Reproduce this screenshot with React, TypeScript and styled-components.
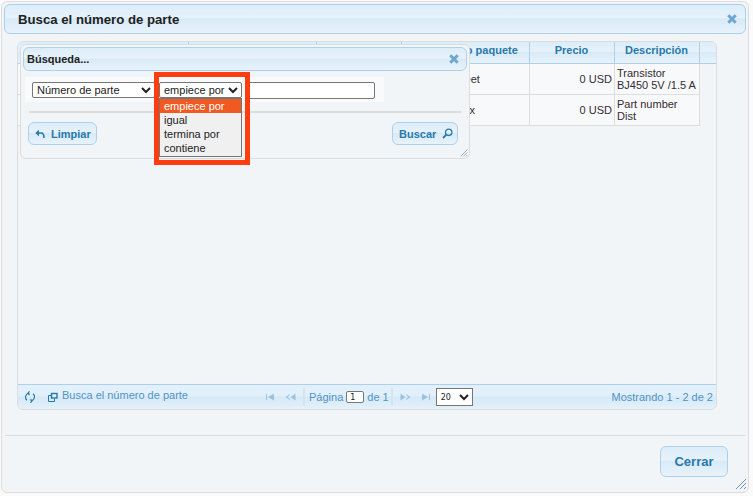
import React from "react";
import styled, { createGlobalStyle } from "styled-components";

const GlobalStyle = createGlobalStyle`
  html, body {
    margin: 0;
    padding: 0;
    background: #fafafa;
    overflow: hidden;
  }
  body {
    font-family: "Liberation Sans", Arial, sans-serif;
    font-size: 11px;
    color: #362b36;
  }
  * {
    box-sizing: border-box;
  }
`;

const headerGradient = "linear-gradient(180deg, #dcedf9 0%, #e6f2fb 45%, #d8eaf7 50%, #e8f3fb 100%)";

const columns = [
  { title: "Número", width: 171 },
  { title: "Fabricante", width: 128 },
  { title: "Voltaje", width: 85 },
  { title: "Contenido paquete", width: 128, pad: 6 },
  { title: "Precio", width: 85 },
  { title: "Descripción", width: 85 },
];

const rows = [
  ["2N3904", "Fairchild", "5 V", "Sheet", "0 USD", "Transistor\nBJ450 5V /1.5 A"],
  ["PN-100", "Genérico", "3 V", "Box", "0 USD", "Part number\nDist"],
];

const Page = styled.div`
  width: 753px;
  height: 496px;
  padding: 1px 4px 3px 1px;
  position: relative;
`;

const Dialog = styled.div`
  width: 748px;
  height: 492px;
  background: #f2f5f7;
  border: 1px solid #dddddd;
  border-radius: 6px;
  padding: 2px;
  display: flex;
  flex-direction: column;
`;

const TitleBar = styled.div`
  height: 30px;
  flex: none;
  display: flex;
  align-items: center;
  justify-content: space-between;
  padding: 0 8px 0 13px;
  background: ${headerGradient};
  border: 1px solid #aed0ea;
  border-radius: 6px;
`;

const Title = styled.h1`
  margin: 0;
  font-size: 13.2px;
  font-weight: bold;
  color: #222222;
`;

const Body = styled.div`
  flex: none;
  padding: 7px 0 0 13px;
`;

const GridBox = styled.div`
  width: 700px;
  height: 369px;
  border: 1px solid #dddddd;
  border-radius: 6px;
  display: flex;
  flex-direction: column;
  overflow: hidden;
`;

const HeaderRow = styled.div`
  height: 22px;
  flex: none;
  display: flex;
  background: ${headerGradient};
  border-bottom: 1px solid #aed0ea;
`;

const HeaderCell = styled.div<{ $w: number; $pad?: number }>`
  width: ${({ $w }) => $w}px;
  flex: none;
  padding: 0 1px 0 ${({ $pad }) => $pad || 0}px;
  text-align: center;
  font-weight: bold;
  color: #2779aa;
  line-height: 17px;
  border-right: 1px solid #aed0ea;
  white-space: nowrap;
`;

const GridBody = styled.div`
  flex: 1;
  border-right: 1px solid #dddddd;
  width: 699px;
`;

const Row = styled.div`
  display: flex;
  height: 31px;
  width: 682px;
  background: #f7f9fa;
  border-bottom: 1px solid #dddddd;
`;

const Cell = styled.div<{ $w: number; $align: string }>`
  width: ${({ $w }) => $w}px;
  flex: none;
  display: flex;
  align-items: center;
  justify-content: ${({ $align }) => $align};
  padding: 0 2px;
  font-size: 11px;
  line-height: 12px;
  color: #362b36;
  border-right: 1px solid #dddddd;
  white-space: pre;
`;

const Pager = styled.div`
  height: 25px;
  flex: none;
  display: flex;
  align-items: center;
  border-top: 1px solid #aed0ea;
  background: linear-gradient(180deg, #e1f0fa 0%, #e1f0fa 45%, #d6e9f7 50%, #e3f1fb 100%);
  color: #5193c4;
  font-size: 11px;
  padding: 0 3px 0 4px;
`;

const PagerCaption = styled.span`
  width: 201px;
  margin-left: 1px;
  margin-top: -4px;
  flex: none;
`;

const PagerIcon = styled.span<{ $dim?: boolean; $w?: number; $gap?: number }>`
  display: inline-flex;
  width: ${({ $w }) => $w || 16}px;
  margin-left: ${({ $gap }) => $gap || 0}px;
  justify-content: center;
  flex: none;
  opacity: ${({ $dim }) => ($dim ? 0.35 : 1)};
`;

const PagerCenter = styled.div`
  display: flex;
  align-items: center;
  flex: none;
`;

const PagerSep = styled.span`
  width: 2px;
  height: 18px;
  background: #d6e3ee;
  margin-right: 4px;
  flex: none;
`;

const PagerSepEnd = styled(PagerSep)`
  margin: 0 0 0 2px;
`;

const PageInput = styled.input`
  width: 18px;
  height: 12px;
  padding: 0 0 0 3px;
  margin: 0 3px 0 3px;
  border: 1px solid #767676;
  border-radius: 2px;
  background: #ffffff;
  font-family: "DejaVu Sans", sans-serif;
  font-size: 8px;
  color: #222222;
`;

const SizeSelect = styled.select`
  width: 37px;
  height: 18px;
  margin-left: 3px;
  font-family: "DejaVu Sans", sans-serif;
  font-size: 8px;
  background: #ffffff;
  color: #222222;
`;

const PagerInfo = styled.span`
  margin-left: auto;
  margin-top: -1px;
`;

const Footer = styled.div`
  flex: 1;
  margin: 25px 0 0 1px;
  border-top: 1px solid #dddddd;
  display: flex;
  justify-content: flex-end;
  padding: 10px 18px 0 0;
`;

const CloseButton = styled.button`
  width: 68px;
  height: 31px;
  font-family: inherit;
  font-size: 13px;
  font-weight: bold;
  color: #2779aa;
  background: ${headerGradient};
  border: 1px solid #aed0ea;
  border-radius: 6px;
`;

const Grip = styled.span<{ $right: number; $bottom: number }>`
  position: absolute;
  right: ${({ $right }) => $right}px;
  bottom: ${({ $bottom }) => $bottom}px;
  display: flex;
  z-index: 2;
`;

const SearchWindow = styled.div`
  position: absolute;
  left: 20px;
  top: 44px;
  width: 450px;
  height: 115px;
  background: #f2f5f7;
  border: 1px solid #dddddd;
  border-radius: 6px;
  padding: 2px;
`;

const SearchBar = styled.div`
  height: 24px;
  display: flex;
  align-items: center;
  justify-content: space-between;
  padding: 0 7px 0 3px;
  background: ${headerGradient};
  border: 1px solid #aed0ea;
  border-radius: 6px;
  font-weight: bold;
  color: #222222;
`;

const FilterRow = styled.div`
  width: 359px;
  height: 25px;
  margin: 6px 0 0 2px;
  padding: 5px 0 0 7px;
  display: flex;
  align-items: flex-start;
  background: #f9fafb;
`;

const Select = styled.select<{ $w: number }>`
  width: ${({ $w }) => $w}px;
  height: 16px;
  flex: none;
  padding: 0;
  font-family: "Liberation Sans", Arial, sans-serif;
  font-size: 11px;
  color: #222222;
  background: #ffffff;
  border: 1px solid #767676;
  border-radius: 2px;
  margin-right: 4px;
`;

const TextInput = styled.input`
  width: 129px;
  height: 17px;
  flex: none;
  border: 1px solid #767676;
  border-radius: 2px;
  background: #ffffff;
`;

const Divider = styled.div`
  height: 2px;
  margin: 9px 6px 0 6px;
  background: #dddddd;
`;

const ButtonRow = styled.div`
  display: flex;
  justify-content: space-between;
  padding: 9px 9px 0 5px;
`;

const SmallButton = styled.button<{ $w: number; $pad: number }>`
  width: ${({ $w }) => $w}px;
  height: 23px;
  display: inline-flex;
  align-items: center;
  gap: 6px;
  padding: 0 0 0 ${({ $pad }) => $pad}px;
  font-family: inherit;
  font-size: 11px;
  font-weight: bold;
  color: #2779aa;
  background: ${headerGradient};
  border: 1px solid #aed0ea;
  border-radius: 6px;
`;

const RedBox = styled.div`
  position: absolute;
  left: 154px;
  top: 72px;
  width: 96px;
  height: 93px;
  border: 5px solid #ff3d0f;
  pointer-events: none;
`;

const OptionList = styled.ul`
  position: absolute;
  left: 159px;
  top: 98px;
  width: 83px;
  height: 59px;
  margin: 0;
  padding: 0;
  list-style: none;
  background: #f0f0f0;
  border: 1px solid #767676;
  font-size: 11px;
  color: #222222;
`;

const Option = styled.li<{ $active?: boolean }>`
  height: 14px;
  line-height: 14px;
  padding-left: 4px;
  background: ${({ $active }) => ($active ? "#f05a22" : "transparent")};
  color: ${({ $active }) => ($active ? "#ffffff" : "#222222")};
`;

const CloseIcon = () => (
  <svg width="10" height="10" viewBox="0 0 10 10">
    <path d="M1.3 1.3l7.4 7.4M8.7 1.3l-7.4 7.4" stroke="#6fa6d0" strokeWidth="3" />
  </svg>
);

const RefreshIcon = () => (
  <svg width="10" height="12" viewBox="0 0 10 12" fill="none" stroke="#2779aa" strokeWidth="1.1">
    <path d="M2 9.3A4 4 0 0 1 4.5 2.2M8 2.7a4 4 0 0 1-2.5 7.1" />
    <path d="M4.5 0.3l-1.6 1.9 1.6 1.9M5.5 8l1.6 1.9-1.6 1.9" />
  </svg>
);

const WindowIcon = () => (
  <svg width="10" height="10" viewBox="0 0 10 10" fill="none" stroke="#2779aa" strokeWidth="1">
    <rect x="3.5" y="1.5" width="5.5" height="4.5" strokeWidth="1.4" />
    <path d="M3 3.5H0.5v6h6V7" />
  </svg>
);

const SeekIcon = ({ flip, double }: { flip?: boolean; double?: boolean }) => (
  <svg width="12" height="8" viewBox="0 0 12 8" fill="#2779aa" style={flip ? { transform: "scaleX(-1)" } : undefined}>
    {double ? (
      <>
        <path d="M5.5 4l5-3.5v7z" />
        <path d="M0.5 4l4.5-3v1L2.5 4 5 6v1z" />
      </>
    ) : (
      <>
        <rect x="1" y="1" width="1" height="6" />
        <path d="M3 4l6-3.5v7z" />
      </>
    )}
  </svg>
);

const UndoIcon = () => (
  <svg width="10" height="10" viewBox="0 0 10 10" fill="none" stroke="#2779aa" strokeWidth="1.6">
    <path d="M3 4h3.2C8 4 9 5.2 9 9" />
    <path d="M0.3 4L4 0.8V7.2z" fill="#2779aa" stroke="none" />
  </svg>
);

const SearchIcon = () => (
  <svg width="11" height="11" viewBox="0 0 11 11" fill="none" stroke="#2779aa" strokeWidth="1.3">
    <circle cx="6.7" cy="4.3" r="3.2" />
    <path d="M4.4 6.6L1 10" strokeWidth="1.8" />
  </svg>
);

const GripIcon = ({ size }: { size: number }) => (
  <svg width={size} height={size} viewBox="0 0 12 12" stroke="#6f93ad" strokeWidth="1">
    <path d="M1 11L11 1M5 11l6-6M9 11l2-2" />
  </svg>
);

const App: React.FC = () => {
  return (
    <Page>
      <GlobalStyle />
      <Dialog>
        <TitleBar>
          <Title>Busca el número de parte</Title>
          <CloseIcon />
        </TitleBar>
        <Body>
          <GridBox>
            <HeaderRow>
              {columns.map((col) => (
                <HeaderCell $w={col.width} $pad={col.pad} key={col.title}>
                  {col.title}
                </HeaderCell>
              ))}
            </HeaderRow>
            <GridBody>
              {rows.map((row, rowIndex) => (
                <Row key={rowIndex}>
                  {row.map((value, index) => (
                    <Cell
                      $w={columns[index].width}
                      $align={index === 4 ? "flex-end" : index === 5 ? "flex-start" : "center"}
                      key={index}>
                      {value}
                    </Cell>
                  ))}
                </Row>
              ))}
            </GridBody>
            <Pager>
              <PagerIcon>
                <RefreshIcon />
              </PagerIcon>
              <PagerIcon $gap={7}>
                <WindowIcon />
              </PagerIcon>
              <PagerCaption>Busca el número de parte</PagerCaption>
              <PagerCenter>
                <PagerIcon $dim>
                  <SeekIcon />
                </PagerIcon>
                <PagerIcon $dim $w={24}>
                  <SeekIcon double />
                </PagerIcon>
                <PagerSep />
                Página
                <PageInput defaultValue="1" />
                de 1
                <PagerSepEnd />
                <PagerIcon $dim $w={24}>
                  <SeekIcon double flip />
                </PagerIcon>
                <PagerIcon $dim>
                  <SeekIcon flip />
                </PagerIcon>
                <SizeSelect defaultValue="20">
                  <option>20</option>
                  <option>50</option>
                </SizeSelect>
              </PagerCenter>
              <PagerInfo>Mostrando 1 - 2 de 2</PagerInfo>
            </Pager>
          </GridBox>
        </Body>
        <Footer>
          <CloseButton>Cerrar</CloseButton>
        </Footer>
      </Dialog>
      <Grip $right={6} $bottom={6}>
        <GripIcon size={12} />
      </Grip>
      <SearchWindow>
        <SearchBar>
          Búsqueda...
          <CloseIcon />
        </SearchBar>
        <FilterRow>
          <Select $w={123} defaultValue="Número de parte">
            <option>Número de parte</option>
          </Select>
          <Select $w={83} defaultValue="empiece por">
            <option>empiece por</option>
          </Select>
          <TextInput />
        </FilterRow>
        <Divider />
        <ButtonRow>
          <SmallButton $w={69} $pad={6}>
            <UndoIcon />
            Limpiar
          </SmallButton>
          <SmallButton $w={66} $pad={6}>
            Buscar
            <SearchIcon />
          </SmallButton>
        </ButtonRow>
        <Grip $right={1} $bottom={1}>
          <GripIcon size={8} />
        </Grip>
      </SearchWindow>
      <OptionList>
        <Option $active>empiece por</Option>
        <Option>igual</Option>
        <Option>termina por</Option>
        <Option>contiene</Option>
      </OptionList>
      <RedBox />
    </Page>
  );
};

export default App;
